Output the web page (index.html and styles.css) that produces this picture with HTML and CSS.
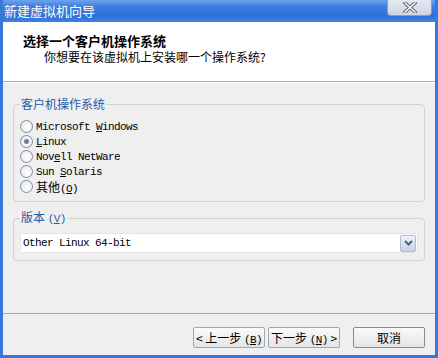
FILE: index.html
```html
<!DOCTYPE html>
<html lang="zh-CN">
<head>
    <meta charset="UTF-8">
    <meta name="viewport" content="width=device-width, initial-scale=1.0">
    <title>新建虚拟机向导</title>
    <link rel="stylesheet" href="styles.css">
</head>
<body>
    <div class="window">
        <div class="titlebar">
            <span class="title">新建虚拟机向导</span>
            <button class="close-btn" aria-label="关闭">
                <svg width="14" height="11" viewBox="0 0 14 11">
                    <path d="M2 1 L12 10 M12 1 L2 10" stroke="#5a6478" stroke-width="3.4" stroke-linecap="square"/>
                    <path d="M2 1 L12 10 M12 1 L2 10" stroke="#ffffff" stroke-width="1.4" stroke-linecap="square"/>
                </svg>
            </button>
        </div>

        <div class="header">
            <div class="header-title">选择一个客户机操作系统</div>
            <div class="header-sub">你想要在该虚拟机上安装哪一个操作系统?</div>
        </div>

        <div class="content">
            <fieldset class="group group-os">
                <legend>客户机操作系统</legend>
                <label class="radio"><span class="dot"></span><span>Microsoft <u>W</u>indows</span></label>
                <label class="radio"><span class="dot checked"></span><span><u>L</u>inux</span></label>
                <label class="radio"><span class="dot"></span><span>Nov<u>e</u>ll NetWare</span></label>
                <label class="radio"><span class="dot"></span><span>Sun <u>S</u>olaris</span></label>
                <label class="radio"><span class="dot"></span><span><span class="cjk">其他</span>(<u>O</u>)</span></label>
            </fieldset>

            <fieldset class="group group-ver">
                <legend>版本 <span class="mono">(<u>V</u>)</span></legend>
                <div class="select">
                    <span class="select-text">Other Linux 64-bit</span>
                    <span class="select-btn">
                        <svg width="9" height="6" viewBox="0 0 9 6">
                            <path d="M1 1 L4.5 4.5 L8 1" fill="none" stroke="#4d6185" stroke-width="2"/>
                        </svg>
                    </span>
                </div>
            </fieldset>
        </div>

        <div class="footer">
            <button class="btn">&lt; 上一步 <span class="mono">(<u>B</u>)</span></button>
            <button class="btn btn-next">下一步 <span class="mono">(<u>N</u>)</span> &gt;</button>
            <button class="btn btn-cancel">取消</button>
        </div>
    </div>
</body>
</html>
```

FILE: styles.css
```css
body {
    margin: 0;
    padding: 0;
    font-family: "Noto Sans CJK SC", sans-serif;
    font-size: 12px;
    color: #000;
}
.window {
    width: 438px;
    height: 358px;
    box-sizing: border-box;
    display: flex;
    flex-direction: column;
    border: 3px solid #3a78d8;
    border-top: none;
    background-color: #efefef;
    overflow: hidden;
}
.titlebar {
    height: 22px;
    margin: 0 -3px;
    padding-left: 4px;
    display: flex;
    align-items: center;
    justify-content: space-between;
    background: linear-gradient(#6ea3ec, #3d7fe0 30%, #2f6fd8 70%, #3f82e0);
}
.title {
    color: #fff;
    font-size: 13px;
    line-height: 22px;
    margin-top: -1px;
}
.close-btn {
    align-self: flex-start;
    width: 45px;
    height: 16px;
    margin-right: 6px;
    padding: 0;
    border: 1px solid #8d9cb8;
    border-top: none;
    border-radius: 0 0 4px 4px;
    background: linear-gradient(#e4e8f0, #cdd4e2);
    display: flex;
    align-items: center;
    justify-content: center;
}
.header {
    height: 60px;
    box-sizing: border-box;
    padding: 11px 0 0 20px;
    background-color: #fff;
    border-bottom: 1px solid #a8a8a8;
}
.header-title {
    font-size: 13px;
    font-weight: bold;
    line-height: 16px;
}
.header-sub {
    line-height: 15px;
    padding-left: 21px;
}
.content {
    flex: 1;
    padding: 14px 10px 0 10px;
    border-top: 1px solid #fff;
}
.group {
    margin: 0;
    padding: 0 6px;
    border: 1px solid #d2d2c8;
    border-radius: 4px;
    box-sizing: border-box;
}
.group legend {
    color: #1f5aa8;
    padding: 0 2px;
    margin-left: -1px;
    line-height: 14px;
}
.group-os {
    height: 105px;
    padding-top: 8px;
}
.group-ver {
    height: 51px;
    margin-top: 8px;
    padding-top: 7px;
}
.mono {
    font-family: "Liberation Mono", monospace;
    font-size: 11px;
    letter-spacing: -0.6px;
}
.cjk {
    font-family: "Noto Sans CJK SC", sans-serif;
    font-size: 12px;
    letter-spacing: 0;
}
.radio {
    display: flex;
    align-items: center;
    height: 15px;
    font-family: "Liberation Mono", "Noto Sans CJK SC", monospace;
    font-size: 11px;
    letter-spacing: -0.6px;
    white-space: pre;
}
.dot {
    width: 11px;
    height: 11px;
    margin-right: 3px;
    border: 1px solid #7b8ca8;
    border-radius: 50%;
    background: radial-gradient(circle at 60% 60%, #ffffff, #e2e2e2);
    position: relative;
}
.dot.checked::after {
    content: "";
    position: absolute;
    left: 3px;
    top: 3px;
    width: 5px;
    height: 5px;
    border-radius: 50%;
    background-color: #6a7f9e;
}
.select {
    height: 18px;
    display: flex;
    align-items: center;
    justify-content: space-between;
    background-color: #fff;
    border: 1px solid #e4e4e4;
}
.select-text {
    padding-left: 2px;
    font-family: "Liberation Mono", monospace;
    font-size: 11px;
    letter-spacing: -0.6px;
}
.select-btn {
    width: 14px;
    height: 15px;
    margin-right: 1px;
    border: 1px solid #b2bccf;
    border-radius: 2px;
    background: linear-gradient(#eef1f8, #c9d2e4);
    display: flex;
    align-items: center;
    justify-content: center;
}
.footer {
    height: 42px;
    box-sizing: border-box;
    display: flex;
    justify-content: flex-end;
    padding: 13px 10px 0 0;
    border-top: 1px solid #a8a8a8;
}
.btn {
    width: 72px;
    height: 21px;
    padding: 0;
    font-family: "Noto Sans CJK SC", sans-serif;
    font-size: 12px;
    color: #000;
    border: 1px solid #a7a7a7;
    border-radius: 2px;
    background: linear-gradient(#fafafa, #e4e4e4);
}
.btn-next {
    margin-left: 3px;
}
.btn-cancel {
    margin-left: 13px;
    border-color: #8a8a8a;
}
```
